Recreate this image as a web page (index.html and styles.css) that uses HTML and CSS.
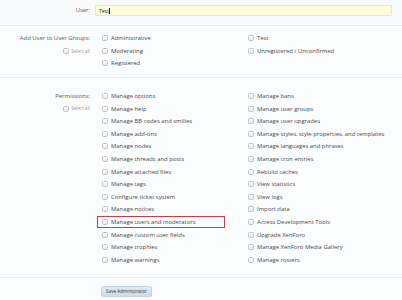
FILE: index.html
```html
<!DOCTYPE html>
<html lang="en">
<head>
  <meta charset="UTF-8" />
  <title>Add Administrator</title>
  <link rel="stylesheet" href="styles.css">
</head>
<body>

<form class="admin-form">
  <!-- Пользователь -->
  <div class="form-row row-user">
    <div class="row-label">User:</div>
    <div class="row-input">
      <div class="text-input">Test<span class="caret"></span></div>
    </div>
  </div>

  <!-- Группы -->
  <div class="form-row row-groups">
    <div class="row-label">
      <div>Add User to User Groups:</div>
      <div class="select-all"><span class="check"></span>Select all</div>
    </div>
    <ul class="options">
      <li><span class="check"></span>Administrative</li>
      <li><span class="check"></span>Test</li>
      <li><span class="check"></span>Moderating</li>
      <li><span class="check"></span>Unregistered / Unconfirmed</li>
      <li><span class="check"></span>Registered</li>
    </ul>
  </div>

  <!-- Права -->
  <div class="form-row row-perms">
    <div class="row-label">
      <div>Permissions:</div>
      <div class="select-all"><span class="check"></span>Select all</div>
    </div>
    <ul class="options">
      <li><span class="check"></span>Manage options</li>
      <li><span class="check"></span>Manage bans</li>
      <li><span class="check"></span>Manage help</li>
      <li><span class="check"></span>Manage user groups</li>
      <li><span class="check"></span>Manage BB codes and smilies</li>
      <li><span class="check"></span>Manage user upgrades</li>
      <li><span class="check"></span>Manage add-ons</li>
      <li><span class="check"></span>Manage styles, style properties, and templates</li>
      <li><span class="check"></span>Manage nodes</li>
      <li><span class="check"></span>Manage languages and phrases</li>
      <li><span class="check"></span>Manage threads and posts</li>
      <li><span class="check"></span>Manage cron entries</li>
      <li><span class="check"></span>Manage attached files</li>
      <li><span class="check"></span>Rebuild caches</li>
      <li><span class="check"></span>Manage tags</li>
      <li><span class="check"></span>View statistics</li>
      <li><span class="check"></span>Configure ticket system</li>
      <li><span class="check"></span>View logs</li>
      <li><span class="check"></span>Manage notices</li>
      <li><span class="check"></span>Import data</li>
      <li class="marked"><span class="check"></span>Manage users and moderators</li>
      <li><span class="check"></span>Access Development Tools</li>
      <li><span class="check"></span>Manage custom user fields</li>
      <li><span class="check"></span>Upgrade XenForo</li>
      <li><span class="check"></span>Manage trophies</li>
      <li><span class="check"></span>Manage XenForo Media Gallery</li>
      <li><span class="check"></span>Manage warnings</li>
      <li><span class="check"></span>Manage rosters</li>
    </ul>
  </div>

  <div class="form-submit">
    <button type="button" class="btn">Save Administrator</button>
  </div>
</form>

</body>
</html>
```

FILE: styles.css
```css
* {
  margin: 0;
  padding: 0;
  box-sizing: border-box;
}

body {
  font-family: 'Open Sans', sans-serif;
  font-size: 5.9px;
  color: #4a4a4a;
  background-color: #fbfcfd;
}

/* Строки формы */
.form-row {
  display: flex;
  border-bottom: 1px solid #e6edf3;
}

.row-label {
  width: 95px;
  flex: none;
  text-align: right;
  padding-right: 5px;
  color: #5a5a5a;
  line-height: 12.6px;
}

.row-user {
  padding: 5px 0 9px;
  background: #f8fafc;
}

.row-user .row-label {
  line-height: 11px;
}

.row-input {
  flex: 1;
  padding-right: 10px;
}

.text-input {
  height: 11px;
  line-height: 10px;
  padding-left: 3px;
  background: #fefed8;
  border: 1px solid #e3e6d8;
  border-radius: 1px;
  color: #222;
  font-size: 5px;
}

.caret {
  display: inline-block;
  width: 1px;
  height: 6px;
  background: #222;
  vertical-align: -1px;
}

.row-groups {
  padding: 6px 0 7px;
}

.row-perms {
  padding: 12px 0 10.5px;
}

.select-all {
  font-size: 4.6px;
  color: #999;
  display: flex;
  justify-content: flex-end;
  align-items: center;
  height: 12.6px;
}

.select-all .check {
  margin-right: 2px;
}

/* Варианты */
.options {
  list-style: none;
  display: grid;
  grid-template-columns: 146px 1fr;
  padding-left: 7px;
  flex: 1;
}

.options li {
  display: flex;
  align-items: center;
  height: 12.6px;
  white-space: nowrap;
}

.check {
  display: inline-block;
  width: 6px;
  height: 6px;
  border: 1px solid #c3c3c3;
  border-radius: 1.5px;
  background: linear-gradient(#ffffff, #e9e9e9);
  margin-right: 3px;
  flex: none;
}

.options li.marked {
  margin-left: -5px;
  padding-left: 4px;
  width: 128px;
  height: 12px;
  margin-top: 0.3px;
  margin-bottom: 0.3px;
  border: 1px solid #d9383c;
}

/* Кнопка */
.form-submit {
  padding: 8px 0 0 101px;
}

.btn {
  font-family: 'Open Sans', sans-serif;
  font-size: 4.6px;
  color: #333;
  height: 11px;
  width: 51px;
  border: 1px solid #c5d3e2;
  border-radius: 2px;
  background: linear-gradient(#e3ecf6, #cddbeb);
}
```
